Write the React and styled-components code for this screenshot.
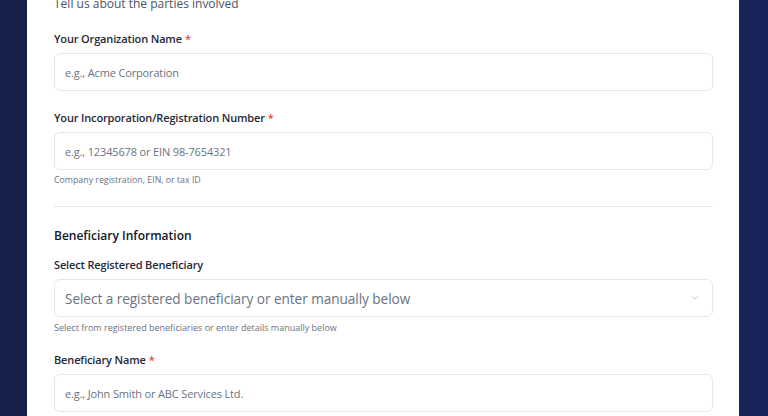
import React from "react";
import styled, { createGlobalStyle } from "styled-components";

const Global = createGlobalStyle`
  html, body { margin: 0; padding: 0; }
  body {
    background: linear-gradient(90deg, #14204a 0%, #17234f 50%, #19255a 100%);
    font-family: "Open Sans", "Noto Sans", sans-serif;
    overflow: hidden;
    height: 416px;
  }
  * { box-sizing: border-box; }
`;

const Page = styled.div`
  padding: 0 29px 0 27px;
  height: 416px;
  overflow: hidden;
`;

const Card = styled.div`
  background: #ffffff;
  margin-top: -8px;
  padding: 0 26px 40px 27px;
  display: flex;
  flex-direction: column;
`;

const Subtitle = styled.p`
  margin: 2px 0 0;
  font-size: 12px;
  line-height: 20px;
  color: #4b5563;
`;

const Field = styled.div`
  display: flex;
  flex-direction: column;
  margin-top: ${(p) => p.$mt || 19}px;
`;

const Label = styled.label`
  font-size: 11px;
  line-height: 16px;
  font-weight: 600;
  color: #1f2937;
  letter-spacing: -0.15px;
`;

const Req = styled.span`
  color: #ef4444;
  margin-left: 3px;
`;

const Input = styled.div`
  margin-top: 6px;
  height: 38px;
  border: 1px solid #e5e7eb;
  border-radius: 6px;
  display: flex;
  align-items: center;
  padding: 0 10px;
  font-size: 11px;
  color: #6b7280;
  letter-spacing: -0.15px;
`;

const Select = styled(Input)`
  justify-content: space-between;
  font-size: 13.6px;
  color: #6b7280;
  letter-spacing: -0.05px;
  padding: 0 12px 0 10px;
`;

const Help = styled.div`
  margin-top: 4px;
  font-size: 8.8px;
  line-height: 12px;
  color: #6b7280;
`;

const Help2 = styled(Help)`
  font-size: 9px;
  margin-top: 5px;
`;

const Divider = styled.hr`
  border: 0;
  border-top: 1px solid #e5e7eb;
  margin: 20px 0 0;
`;

const Heading = styled.h3`
  margin: 20px 0 0;
  font-size: 12px;
  line-height: 18px;
  font-weight: 600;
  color: #111827;
`;

const Chevron = () => (
  <svg width="10" height="10" viewBox="0 0 24 24" fill="none" stroke="#b0b5bd" strokeWidth="2" strokeLinecap="round" strokeLinejoin="round">
    <path d="m6 9 6 6 6-6" />
  </svg>
);

export default function App() {
  return (
    <>
      <Global />
      <Page>
        <Card>
          <Subtitle>Tell us about the parties involved</Subtitle>
          <Field $mt={17}>
            <Label>Your Organization Name<Req>*</Req></Label>
            <Input>e.g., Acme Corporation</Input>
          </Field>
          <Field>
            <Label>Your Incorporation/Registration Number<Req>*</Req></Label>
            <Input>e.g., 12345678 or EIN 98-7654321</Input>
            <Help>Company registration, EIN, or tax ID</Help>
          </Field>
          <Divider />
          <Heading>Beneficiary Information</Heading>
          <Field $mt={12}>
            <Label>Select Registered Beneficiary</Label>
            <Select>
              <span>Select a registered beneficiary or enter manually below</span>
              <Chevron />
            </Select>
            <Help2>Select from registered beneficiaries or enter details manually below</Help2>
          </Field>
          <Field $mt={18}>
            <Label>Beneficiary Name<Req>*</Req></Label>
            <Input>e.g., John Smith or ABC Services Ltd.</Input>
          </Field>
        </Card>
      </Page>
    </>
  );
}
